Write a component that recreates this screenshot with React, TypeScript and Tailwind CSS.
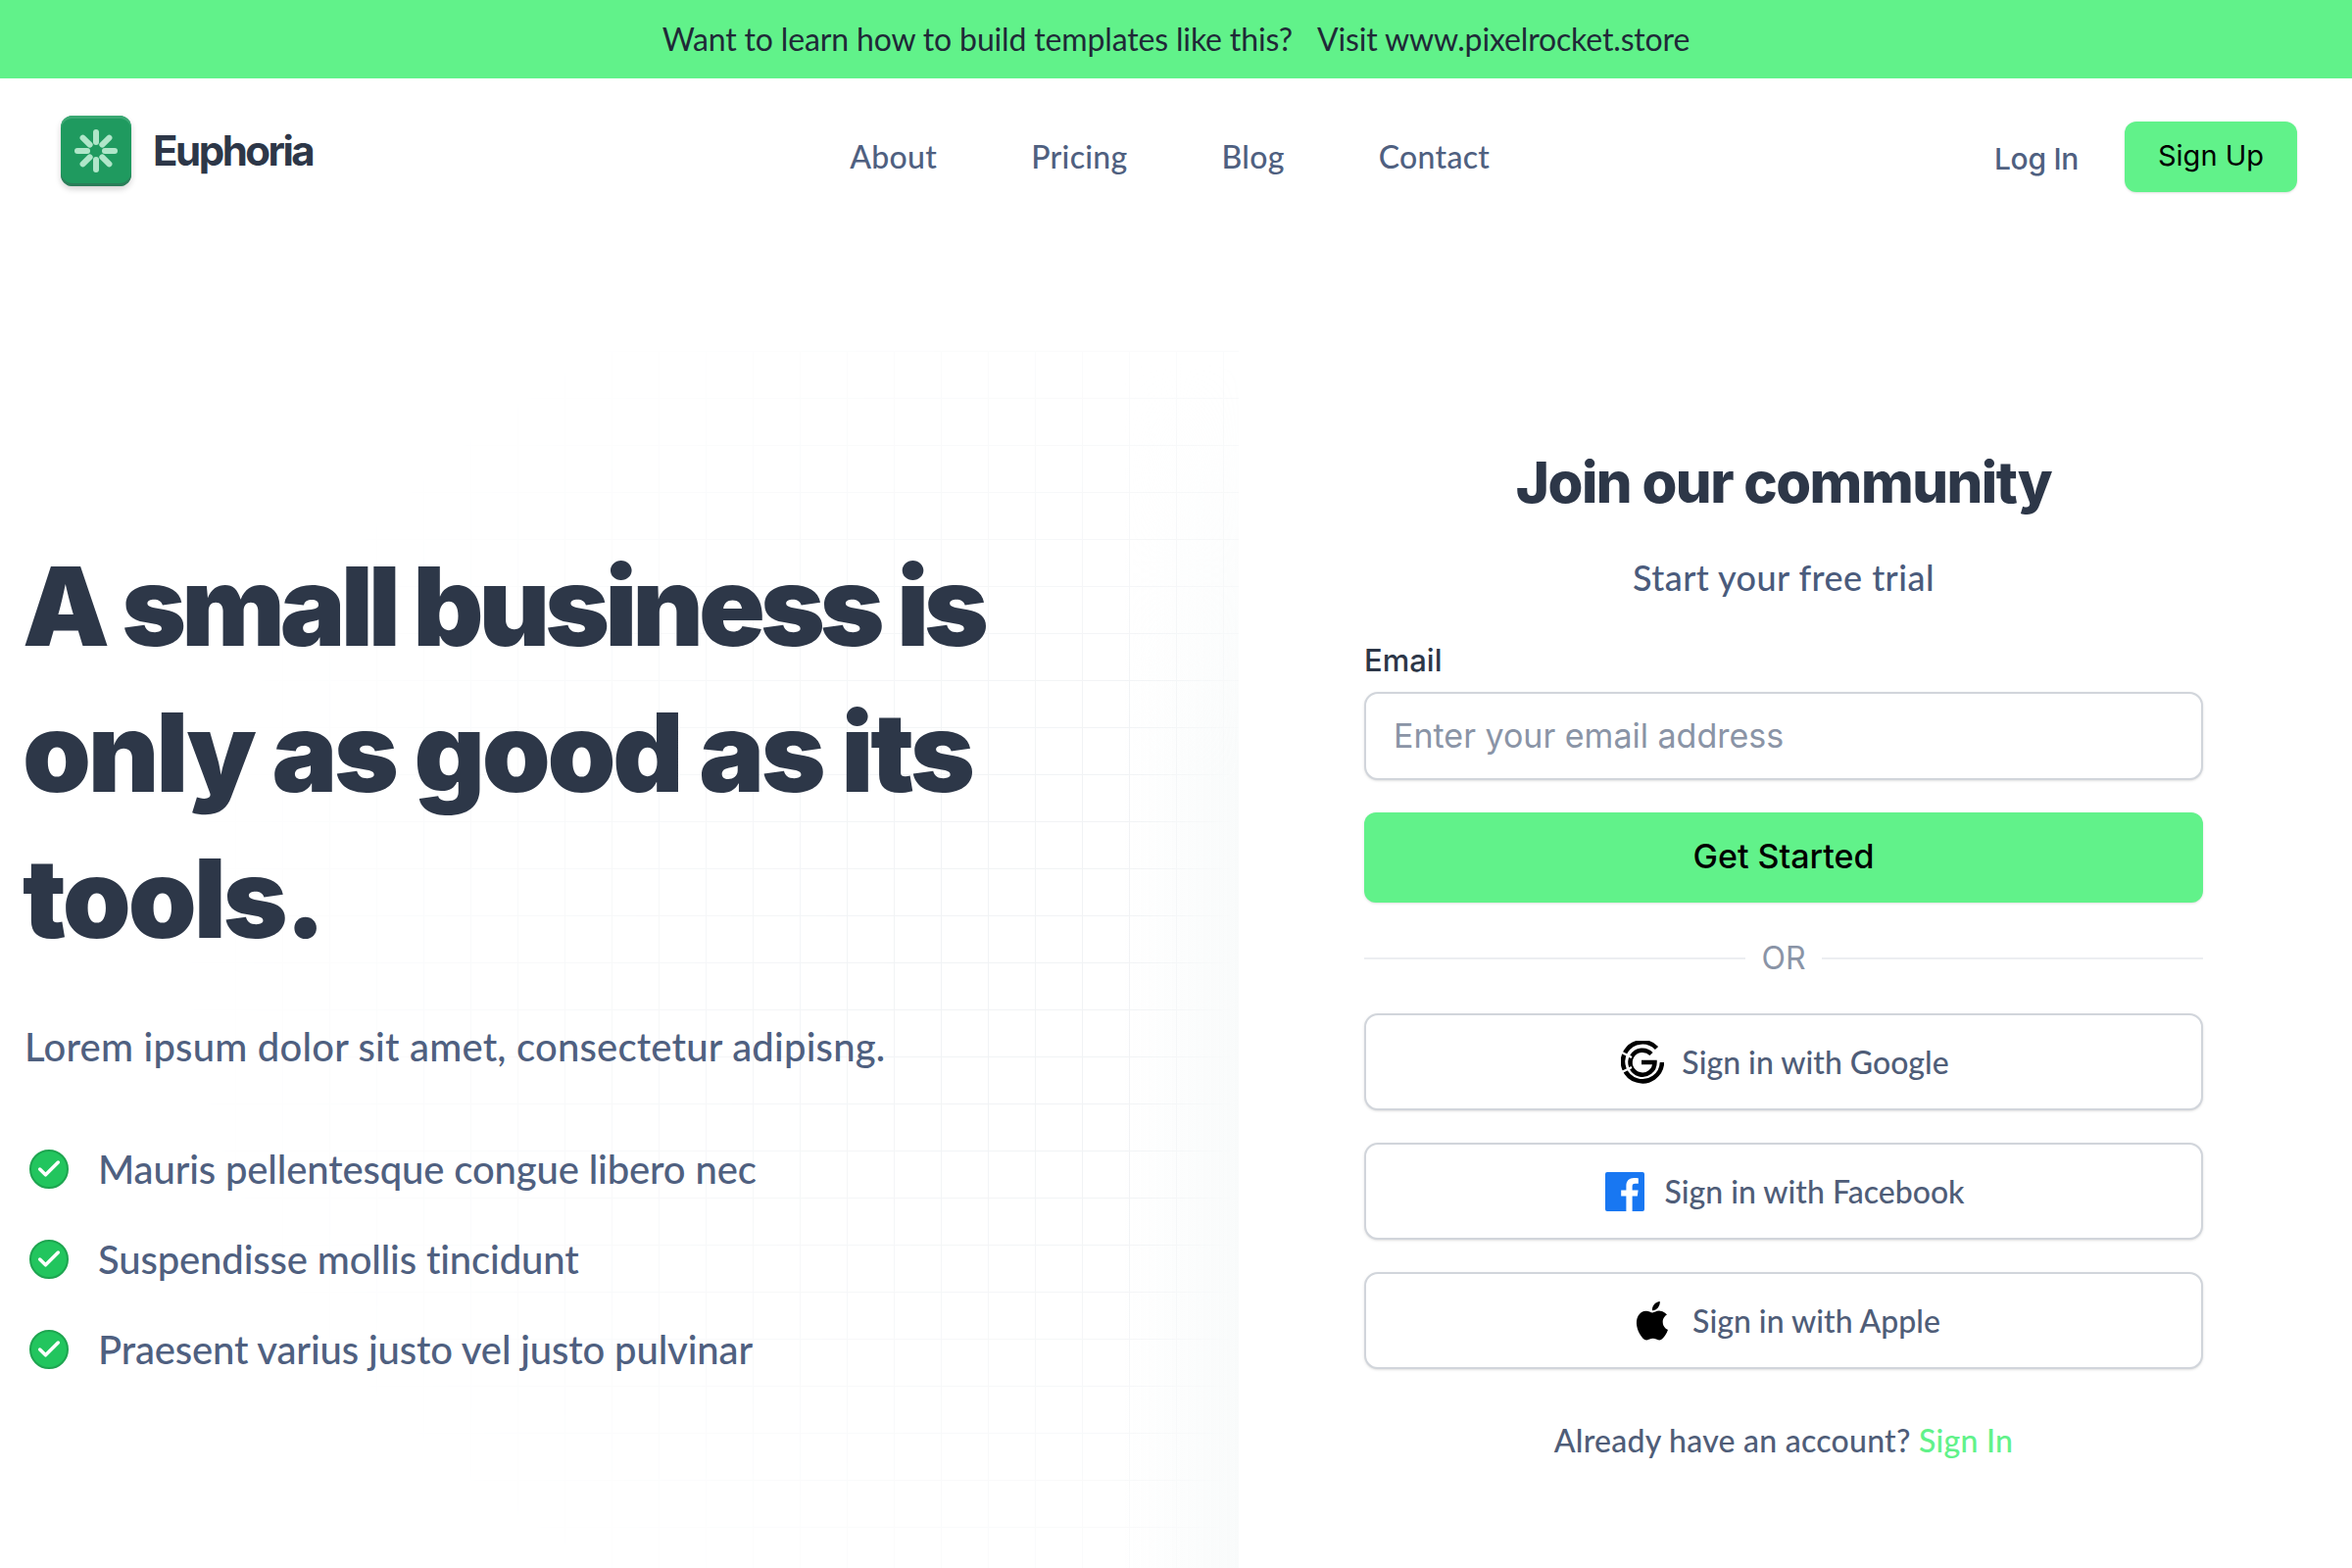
import { Check } from 'lucide-react';

const navLinks = ['About', 'Pricing', 'Blog', 'Contact'];

const features = [
  'Mauris pellentesque congue libero nec',
  'Suspendisse mollis tincidunt',
  'Praesent varius justo vel justo pulvinar',
];

function Logo() {
  const spokes = [0, 45, 90, 135, 180, 225, 270, 315];
  return (
    <div className="w-[72px] h-[72px] rounded-[12px] bg-[#1f9a5f] shadow-[inset_0_-3px_0_#2a7d58,inset_0_3px_0_#3aa873,0_3px_6px_rgba(0,0,0,0.18)] flex items-center justify-center -mt-[12px]">
      <svg className="w-[48px] h-[48px]" viewBox="0 0 48 48" fill="none" aria-hidden="true">
        {spokes.map((a) => (
          <line key={a} x1="24" y1="15" x2="24" y2="5" stroke="#b0e6c9" strokeWidth="6" strokeLinecap="round" transform={`rotate(${a} 24 24)`} />
        ))}
      </svg>
    </div>
  );
}

function GoogleIcon() {
  return (
    <svg className="w-[44px] h-[44px] translate-x-[3px]" viewBox="0 0 44 44" fill="none" aria-hidden="true">
      <path d="M36.500 7.500A20 20 0 1 0 42 22" stroke="#000" strokeWidth="4.500" />
      <path d="M31 13.500A12.500 12.500 0 1 0 34.500 22H21" stroke="#000" strokeWidth="4.500" />
      <path d="M1 12L11 17M1 32L11 27" stroke="#fff" strokeWidth="2.500" />
    </svg>
  );
}

function FacebookIcon() {
  return (
    <svg className="w-[40px] h-[40px] translate-x-[3px]" viewBox="0 0 40 40" aria-hidden="true">
      <rect width="40" height="40" rx="2" fill="#1877f2" />
      <path d="M27.600 40V24.500h5.200l.8-6h-6v-3.900c0-1.800.5-2.900 3-2.900h3.200V6.300c-.6-.1-2.500-.3-4.600-.3-4.600 0-7.800 2.800-7.800 8v4.500h-5.200v6h5.200V40z" fill="#fff" />
    </svg>
  );
}

function AppleIcon() {
  return (
    <svg className="w-[46px] h-[46px] translate-x-[4px]" viewBox="0 0 24 24" fill="#000" aria-hidden="true">
      <path d="M17.050 12.540c-.03-2.600 2.120-3.850 2.220-3.910-1.210-1.770-3.090-2.010-3.760-2.040-1.600-.16-3.120.94-3.930.94-.81 0-2.060-.92-3.390-.89-1.740.03-3.350 1.010-4.250 2.570-1.810 3.140-.46 7.800 1.300 10.350.86 1.250 1.890 2.650 3.240 2.600 1.300-.05 1.790-.84 3.360-.84 1.570 0 2.010.84 3.390.81 1.400-.02 2.290-1.270 3.140-2.530.99-1.450 1.400-2.860 1.420-2.930-.03-.01-2.720-1.040-2.740-4.130zM14.470 4.900c.72-.87 1.200-2.070 1.070-3.280-1.030.04-2.280.69-3.020 1.560-.66.77-1.240 2-1.090 3.180 1.150.09 2.320-.58 3.040-1.460z" />
    </svg>
  );
}

function CheckBadge() {
  return (
    <span className="w-[40px] h-[40px] rounded-full bg-[#22c55e] border-2 border-[#1ea550] flex items-center justify-center shrink-0">
      <Check className="w-[28px] h-[28px] text-white" strokeWidth={3} />
    </span>
  );
}

function SocialButton({ icon, label, gap }: { icon: React.ReactNode; label: string; gap: string }) {
  return (
    <button className={`h-[99px] w-full rounded-[14px] border-2 border-[#d1d5db] bg-white shadow-sm flex items-center justify-center ${gap} text-[32px] text-[#4f5d78] font-medium`}>
      {icon}
      <span>{label}</span>
    </button>
  );
}

export default function App() {
  return (
    <div className="w-[2400px] h-[1600px] bg-white overflow-hidden font-[Lato,sans-serif]">
      <div className="h-20 bg-[#61f28a] flex items-center justify-center text-[32px] tracking-[-0.15px] text-[#1f2937]">
        Want to learn how to build templates like this?
        <span className="ml-[25px]">Visit www.pixelrocket.store</span>
      </div>

      <header className="h-[160px] pl-[62px] pr-[56px] flex items-center">
        <div className="flex items-center gap-[22px]">
          <Logo />
          <span className="text-[42px] font-bold text-[#2d3748] tracking-[-2.500px] -mt-[14px] font-[Inter,sans-serif]">Euphoria</span>
        </div>
        <nav className="ml-[548px] flex items-center gap-[96px] text-[32px] tracking-[0.3px] font-medium text-[#4f6080]">
          {navLinks.map((l) => (
            <a key={l}>{l}</a>
          ))}
        </nav>
        <div className="ml-auto flex items-center gap-[47px]">
          <a className="text-[30px] font-medium tracking-[-0.3px] text-[#4f6080] font-[Inter,sans-serif] mt-[4px]">Log In</a>
          <button className="h-[72px] w-[176px] pb-[2px] rounded-[12px] bg-[#61f28a] shadow-sm text-[29px] text-black font-[Inter,sans-serif]">Sign Up</button>
        </div>
      </header>

      <main className="relative h-[1360px] grid grid-cols-[1264px_1fr]">
        {/* faint grid behind the hero */}
        <div className="absolute left-0 top-[118px] w-[1264px] h-[1242px] bg-[linear-gradient(to_right,#f1f3f5_1px,transparent_1px),linear-gradient(to_bottom,#f1f3f5_1px,transparent_1px)] bg-[size:48px_48px] [mask-image:radial-gradient(ellipse_1100px_800px_at_100%_50%,black_30%,transparent_100%)]" />
        <div className="absolute left-[1144px] top-[130px] w-[120px] h-[1230px] bg-gradient-to-r from-transparent to-[#f9fbfb] [mask-image:linear-gradient(to_bottom,transparent,black_35%)]" />

        <section className="relative pl-[23px] pt-[304px]">
          <h1 className="text-[112px] leading-[149px] font-black text-[#2d3748] font-[Inter,sans-serif]">
            <span className="block tracking-[-5px]">A small business is</span>
            <span className="block tracking-[-3.300px]">only as good as its</span>
            <span className="block tracking-[-3px]">tools.</span>
          </h1>
          <p className="mt-[49px] pl-[2px] text-[40px] leading-[56px] tracking-[0.2px] font-medium text-[#4f6080]">Lorem ipsum dolor sit amet, consectetur adipisng.</p>
          <ul className="mt-[77px] flex flex-col gap-[52px]">
            {features.map((f) => (
              <li key={f} className="flex items-center gap-[30px] h-[40px] pl-[7px] text-[40px] tracking-[-0.14px] font-medium text-[#4f6080]">
                <CheckBadge />
                {f}
              </li>
            ))}
          </ul>
        </section>

        <section className="relative pl-[128px] pt-[216px]">
          <div className="w-[856px]">
            <h2 className="text-center text-[58px] leading-[72px] font-extrabold tracking-[-1.500px] text-[#2d3748] font-[Inter,sans-serif]">Join our community</h2>
            <p className="mt-[37px] text-center text-[36px] leading-[48px] tracking-[0.45px] font-medium text-[#4a5b7c]">Start your free trial</p>
            <label className="block mt-[43px] text-[31px] leading-[36px] font-medium text-[#2d3748] font-[Inter,sans-serif]">Email</label>
            <div className="mt-[14px] h-[90px] pb-[2px] rounded-[14px] border-2 border-[#d1d5db] bg-white shadow-sm pl-[28px] flex items-center text-[34px] text-[#8a94a6] font-[Inter,sans-serif]">
              Enter your email address
            </div>
            <button className="mt-[33px] h-[92px] pb-[3px] w-full rounded-[12px] bg-[#61f28a] shadow-sm text-[34px] font-medium text-black font-[Inter,sans-serif]">Get Started</button>
            <div className="mt-[37px] h-[40px] flex items-center gap-[16px]">
              <div className="flex-1 h-[2px] bg-[#eceef1]" />
              <span className="text-[32px] text-[#8a94a6] font-[Inter,sans-serif]">OR</span>
              <div className="flex-1 h-[2px] bg-[#eceef1]" />
            </div>
            <div className="mt-[36px] flex flex-col gap-[33px]">
              <SocialButton icon={<GoogleIcon />} label="Sign in with Google" gap="gap-[21px]" />
              <SocialButton icon={<FacebookIcon />} label="Sign in with Facebook" gap="gap-[23px]" />
              <SocialButton icon={<AppleIcon />} label="Sign in with Apple" gap="gap-[21px]" />
            </div>
            <p className="mt-[51px] text-center text-[32px] leading-[44px] tracking-[0.25px] font-medium text-[#4f5d78]">
              Already have an account? <a className="text-[#61f28a]">Sign In</a>
            </p>
          </div>
        </section>
      </main>
    </div>
  );
}
